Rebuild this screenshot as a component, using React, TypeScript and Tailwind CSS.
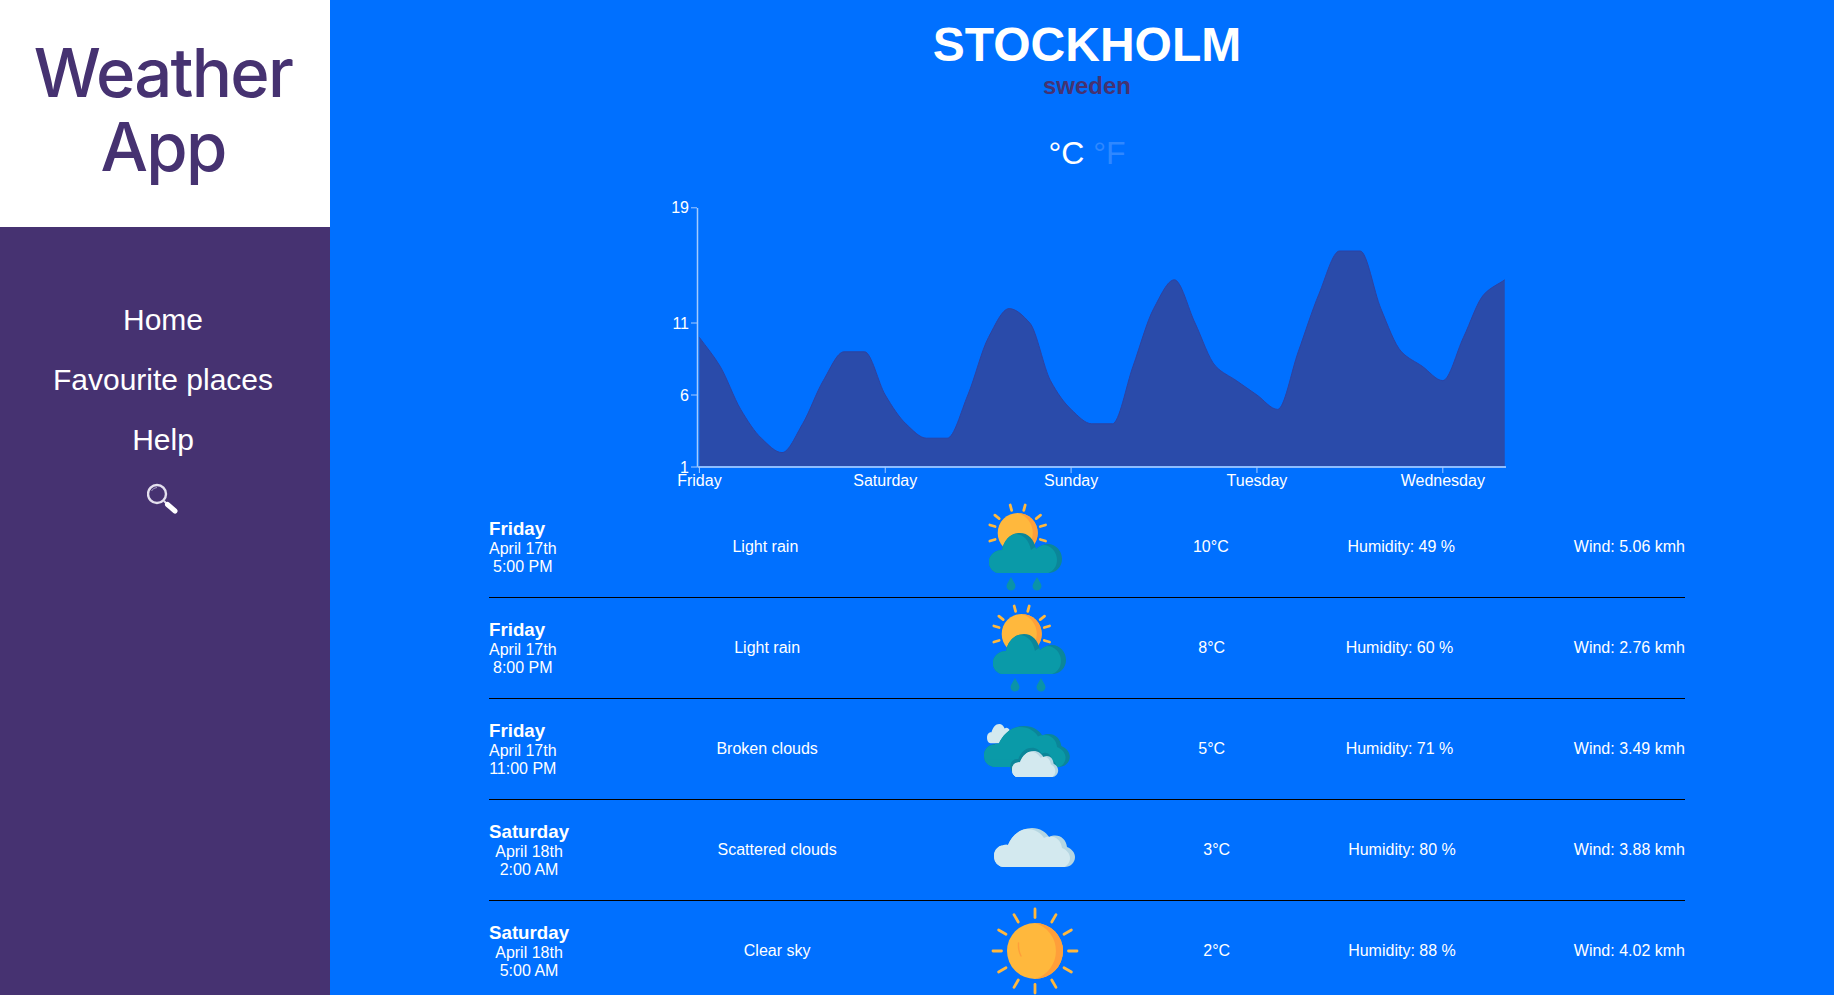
import { useId } from 'react';

const temps = [10, 8, 5, 3, 2, 4, 7, 9, 9, 6, 4, 3, 3, 6, 10, 12, 11, 7, 5, 4, 4, 8, 12, 14, 11, 8, 7, 6, 5, 9, 13, 16, 16, 12, 9, 8, 7, 10, 13, 14];
const ticks = ['Friday', 'Saturday', 'Sunday', 'Tuesday', 'Wednesday'];

const LEFT = 50.4;
const STEP = 20.65;
const BASE = 276;
const UNIT = 14.4;

// monotone cubic, same curve the chart lib uses
function buildCurve() {
    const pts = temps.map((t, i) => [LEFT + i * STEP, BASE - (t - 1) * UNIT]);
    const slopes = pts.slice(1).map((p, i) => (p[1] - pts[i][1]) / STEP);
    const m = pts.map((_, i) => {
        if (i === 0) return slopes[0];
        if (i === pts.length - 1) return slopes[i - 1];
        const a = slopes[i - 1];
        const b = slopes[i];
        if (a * b <= 0) return 0;
        return (2 * a * b) / (a + b);
    });
    let d = `M${pts[0][0]} ${pts[0][1]}`;
    for (let i = 1; i < pts.length; i++) {
        const h = STEP / 3;
        d += ` C${pts[i - 1][0] + h} ${pts[i - 1][1] + m[i - 1] * h} ${pts[i][0] - h} ${pts[i][1] - m[i] * h} ${pts[i][0]} ${pts[i][1]}`;
    }
    return d;
}

const RAIN_CLOUD = 'M25 76 C18 76 14 71 14 65 C14 59 19 53 27 53 C29 43 36 36 45 36 C53 36 59 42 61 52 C64 49 69 47 73 47 C81 47 87 54 87 62 C87 70 81 76 73 76 Z';
const PUFF_CLOUD = 'M17 67 C10 67 6 62 6 56 C6 49 12 44 20 45 C24 35 33 28 44 28 C52 28 58 32 61 37 C70 33 78 38 79 47 C84 49 87 53 87 57 C87 63 82 67 77 67 Z';

function Cloud({ d, light, dark, shift = 5 }: { d: string; light: string; dark: string; shift?: number }) {
    const id = useId();
    return (
        <g>
            <clipPath id={id}>
                <path d={d} />
            </clipPath>
            <path d={d} fill={dark} />
            <g clipPath={`url(#${id})`}>
                <path d={d} fill={light} transform={`translate(${-shift} 1)`} />
                <rect x="0" y="60" width="40" height="20" fill={light} />
            </g>
        </g>
    );
}

function Ray({ x1, y1, x2, y2 }: { x1: number; y1: number; x2: number; y2: number }) {
    return <line x1={x1} y1={y1} x2={x2} y2={y2} stroke="#ffb83d" strokeWidth="2.8" strokeLinecap="round" />;
}

function RainIcon() {
    const cx = 42.7;
    const cy = 36;
    const rays = [-105, -75, -142, -38, 196, -16, 164, 16];
    return (
        <svg viewBox="-1 0 100 100" className="w-[100px] h-[100px]">
            {rays.map((a) => {
                const r = (a * Math.PI) / 180;
                return <Ray key={a} x1={cx + Math.cos(r) * 23.5} y1={cy + Math.sin(r) * 23.5} x2={cx + Math.cos(r) * 29} y2={cy + Math.sin(r) * 29} />;
            })}
            <circle cx={cx} cy={cy} r="20" fill="#ffb83d" />
            <path d={`M${cx} ${cy - 20} A20 20 0 0 1 ${cx} ${cy + 20} A20.8 20.8 0 0 0 ${cx} ${cy - 20} Z`} fill="#ff9f3a" />
            <Cloud d={RAIN_CLOUD} light="#0a9aa8" dark="#0b8699" />
            <path d="M36 80 C34 84 31.5 87 31.5 89 A4.5 4.5 0 0 0 40.5 89 C40.5 87 38 84 36 80 Z" fill="#0a93a8" />
            <path d="M62 80 C60 84 57.5 87 57.5 89 A4.5 4.5 0 0 0 66.5 89 C66.5 87 64 84 62 80 Z" fill="#0a93a8" />
        </svg>
    );
}

function BrokenIcon() {
    return (
        <svg viewBox="0 0 100 100" className="w-[100px] h-[100px]">
            <g transform="translate(7.1 11.3) scale(0.32 0.49)">
                <path d={PUFF_CLOUD} fill="#d3e9ef" />
            </g>
            <g transform="translate(-0.4 -2.4) scale(1.06 1.05)">
                <Cloud d={PUFF_CLOUD} light="#0a9aa8" dark="#0b8699" shift={4} />
            </g>
            <g transform="translate(30.6 33.3) scale(0.57 0.667)">
                <path d={PUFF_CLOUD} fill="#0b8699" transform="translate(-3 -5)" />
                <Cloud d={PUFF_CLOUD} light="#d3e9ef" dark="#b5d6e2" />
            </g>
        </svg>
    );
}

function CloudIcon() {
    return (
        <svg viewBox="-3 0 100 100" className="w-[100px] h-[100px]">
            <Cloud d={PUFF_CLOUD} light="#d3e9ef" dark="#b5d6e2" />
        </svg>
    );
}

function SunIcon() {
    const rays = [0, 30, 60, 90, 120, 150, 180, 210, 240, 270, 300, 330];
    return (
        <svg viewBox="0 0 100 100" className="w-[100px] h-[100px]">
            {rays.map((a) => {
                const r = (a * Math.PI) / 180;
                return <Ray key={a} x1={50 + Math.cos(r) * 33.5} y1={50 + Math.sin(r) * 33.5} x2={50 + Math.cos(r) * 42} y2={50 + Math.sin(r) * 42} />;
            })}
            <circle cx="50" cy="50" r="28" fill="#ffb83d" />
            <path d="M50 22 A28 28 0 0 1 50 78 A29.2 29.2 0 0 0 50 22 Z" fill="#ff9f3a" />
            <path d="M33.5 42 Q33 49 36 55" stroke="#ff9f3a" strokeWidth="1.4" fill="none" strokeLinecap="round" />
        </svg>
    );
}

const rows = [
    { day: 'Friday', date: 'April 17th', time: '5:00 PM', desc: 'Light rain', Icon: RainIcon, temp: '10°C', hum: '49', wind: '5.06' },
    { day: 'Friday', date: 'April 17th', time: '8:00 PM', desc: 'Light rain', Icon: RainIcon, temp: '8°C', hum: '60', wind: '2.76' },
    { day: 'Friday', date: 'April 17th', time: '11:00 PM', desc: 'Broken clouds', Icon: BrokenIcon, temp: '5°C', hum: '71', wind: '3.49' },
    { day: 'Saturday', date: 'April 18th', time: '2:00 AM', desc: 'Scattered clouds', Icon: CloudIcon, temp: '3°C', hum: '80', wind: '3.88' },
    { day: 'Saturday', date: 'April 18th', time: '5:00 AM', desc: 'Clear sky', Icon: SunIcon, temp: '2°C', hum: '88', wind: '4.02' },
];

function Chart() {
    const curve = buildCurve();
    const endX = LEFT + 39 * STEP;
    return (
        <svg width="876" height="300" className="mt-[19px] block shrink-0">
            <path d={`${curve} L${endX} ${BASE} L${LEFT} ${BASE} Z`} fill="#2a4baa" />
            <path d={curve} fill="none" stroke="#2c43a2" strokeWidth="1" />
            <line x1="48.5" y1="17" x2="48.5" y2={BASE} stroke="#a5cbff" strokeWidth="1.5" />
            <line x1="48.5" y1={BASE} x2="857" y2={BASE} stroke="#8dbdff" strokeWidth="2" />
            {[19, 11, 6, 1].map((v) => {
                const y = BASE - (v - 1) * UNIT;
                return (
                    <g key={v}>
                        <line x1="42" y1={y} x2="48" y2={y} stroke="#a5cbff" />
                        <text x="40" y={y + 5.5} textAnchor="end" fontSize="16" fill="#fff">{v}</text>
                    </g>
                );
            })}
            {ticks.map((t, i) => {
                const x = LEFT + i * 9 * STEP;
                return (
                    <g key={t}>
                        <line x1={x} y1={BASE} x2={x} y2={BASE + 6} stroke="#a5cbff" />
                        <text x={x} y={BASE + 19} textAnchor="middle" fontSize="16" fill="#fff">{t}</text>
                    </g>
                );
            })}
        </svg>
    );
}

export default function App() {
    return (
        <div className="flex h-[995px] overflow-hidden bg-[#0070ff] text-white font-['Liberation_Sans',Arial,sans-serif]">
            <aside className="w-[330px] shrink-0 bg-[#463271]">
                <div className="h-[227px] bg-white pt-[36px] pr-[4px] text-center text-[#463271] text-[67px] leading-[74px] tracking-[-1.7px] font-medium font-['Inter',sans-serif]">
                    <div>Weather</div>
                    <div>App</div>
                </div>
                <nav className="w-[326px] pt-[62px] flex flex-col items-center text-[30px]">
                    <a className="h-[60px] flex items-center">Home</a>
                    <a className="h-[60px] flex items-center">Favourite places</a>
                    <a className="h-[60px] flex items-center">Help</a>
                    <svg viewBox="0 0 32 32" className="w-8 h-8 mt-[13px]">
                        <circle cx="10" cy="12" r="9" fill="none" stroke="#e4e0ee" strokeWidth="2.4" />
                        <path d="M4.5 9 A6.5 6.5 0 0 1 10 5.5" fill="none" stroke="#a99fc4" strokeWidth="1" />
                        <line x1="17" y1="19" x2="20" y2="22" stroke="#e4e0ee" strokeWidth="2" />
                        <line x1="20.5" y1="22.5" x2="28" y2="29" stroke="#fff" strokeWidth="5" strokeLinecap="round" />
                    </svg>
                </nav>
            </aside>

            <main className="flex-1 pl-[10px] pt-[17px] flex flex-col items-center">
                <h1 className="text-5xl leading-[55px] font-bold shrink-0">STOCKHOLM</h1>
                <h2 className="text-2xl leading-[28px] font-bold text-[#463271] shrink-0">sweden</h2>
                <div className="mt-[35px] text-[32px] leading-[37px] shrink-0">
                    <span>°C</span> <span className="text-[#2f88ff]">°F</span>
                </div>
                <Chart />
                <div className="mt-[6px] w-[1196px] shrink-0">
                    {rows.map((r, i) => (
                        <div key={i} className="h-[101px] flex justify-between items-center border-b border-black">
                            <div className="text-center">
                                <div className="text-[18.72px] leading-[19px] mb-[2px] font-bold text-left">{r.day}</div>
                                <div className="leading-[18px]">{r.date}</div>
                                <div className="leading-[18px]">{r.time}</div>
                            </div>
                            <div className="w-[180px] text-center">{r.desc}</div>
                            <div className="w-[100px] h-[100px]"><r.Icon /></div>
                            <div>{r.temp}</div>
                            <div>Humidity: {r.hum} %</div>
                            <div>Wind: {r.wind} kmh</div>
                        </div>
                    ))}
                </div>
            </main>
        </div>
    );
}
